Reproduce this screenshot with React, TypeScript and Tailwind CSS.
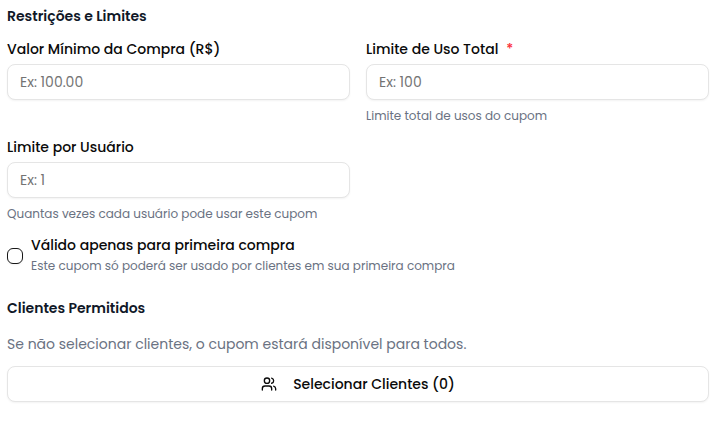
import * as React from 'react';
import { Users } from 'lucide-react'

type FieldProps = {
  id: string
  label: string
  placeholder: string
  hint?: string
  required?: boolean
}

const Field = ({ id, label, placeholder, hint, required }: FieldProps) => {
  return (
    <div className="flex min-w-0 flex-col gap-2">
      <label htmlFor={id} className="flex gap-2 whitespace-nowrap text-sm leading-[14px] font-medium text-neutral-950">
        {label}
        {required ? <span className="text-red-500">*</span> : null}
      </label>
      <input
        id={id}
        type="text"
        inputMode="decimal"
        required={required}
        placeholder={placeholder}
        className="h-9 w-full rounded-lg border border-neutral-200 bg-white px-3 text-sm shadow-xs placeholder:text-neutral-500"
      />
      {hint ? <p className="text-xs text-gray-500">{hint}</p> : null}
    </div>
  )
}

const App = () => {
  const [firstPurchase, setFirstPurchase] = React.useState<boolean>(false)

  return (
    <form className="flex flex-col gap-6 bg-white py-1.5 pr-1.5 pl-[7px] font-['Poppins','Inter',sans-serif]">
      <section className="flex flex-col gap-4">
        <h3 className="text-sm font-semibold text-gray-900">Restrições e Limites</h3>
        <div className="grid grid-cols-2 gap-4">
          <Field id="min-value" label="Valor Mínimo da Compra (R$)" placeholder="Ex: 100.00" />
          <Field id="total-limit" label="Limite de Uso Total" placeholder="Ex: 100" hint="Limite total de usos do cupom" required />
          <Field id="user-limit" label="Limite por Usuário" placeholder="Ex: 1" hint="Quantas vezes cada usuário pode usar este cupom" />
        </div>
        <div className="flex items-center gap-2">
          <input
            id="first-purchase"
            type="checkbox"
            checked={firstPurchase}
            onChange={(e) => setFirstPurchase(e.currentTarget.checked)}
            aria-describedby="first-purchase-hint"
            className="size-4 shrink-0 appearance-none rounded-md border border-neutral-900 shadow-xs checked:bg-neutral-900"
          />
          <div className="flex flex-col gap-1.5">
            <label htmlFor="first-purchase" className="text-sm leading-[14px] font-medium text-neutral-950">
              Válido apenas para primeira compra
            </label>
            <p id="first-purchase-hint" className="text-xs text-gray-500">
              Este cupom só poderá ser usado por clientes em sua primeira compra
            </p>
          </div>
        </div>
      </section>

      <section className="flex flex-col">
        <h3 className="text-sm font-semibold text-gray-900">Clientes Permitidos</h3>
        <p className="mt-4 text-sm text-gray-500">
          Se não selecionar clientes, o cupom estará disponível para todos.
        </p>
        <button
          type="button"
          className="mt-3 flex h-9 w-full items-center justify-center gap-4 rounded-lg border border-neutral-200 bg-white text-sm font-medium text-neutral-950 shadow-xs"
        >
          <Users className="size-4" />
          Selecionar Clientes (0)
        </button>
      </section>
    </form>
  )
}

export default App
